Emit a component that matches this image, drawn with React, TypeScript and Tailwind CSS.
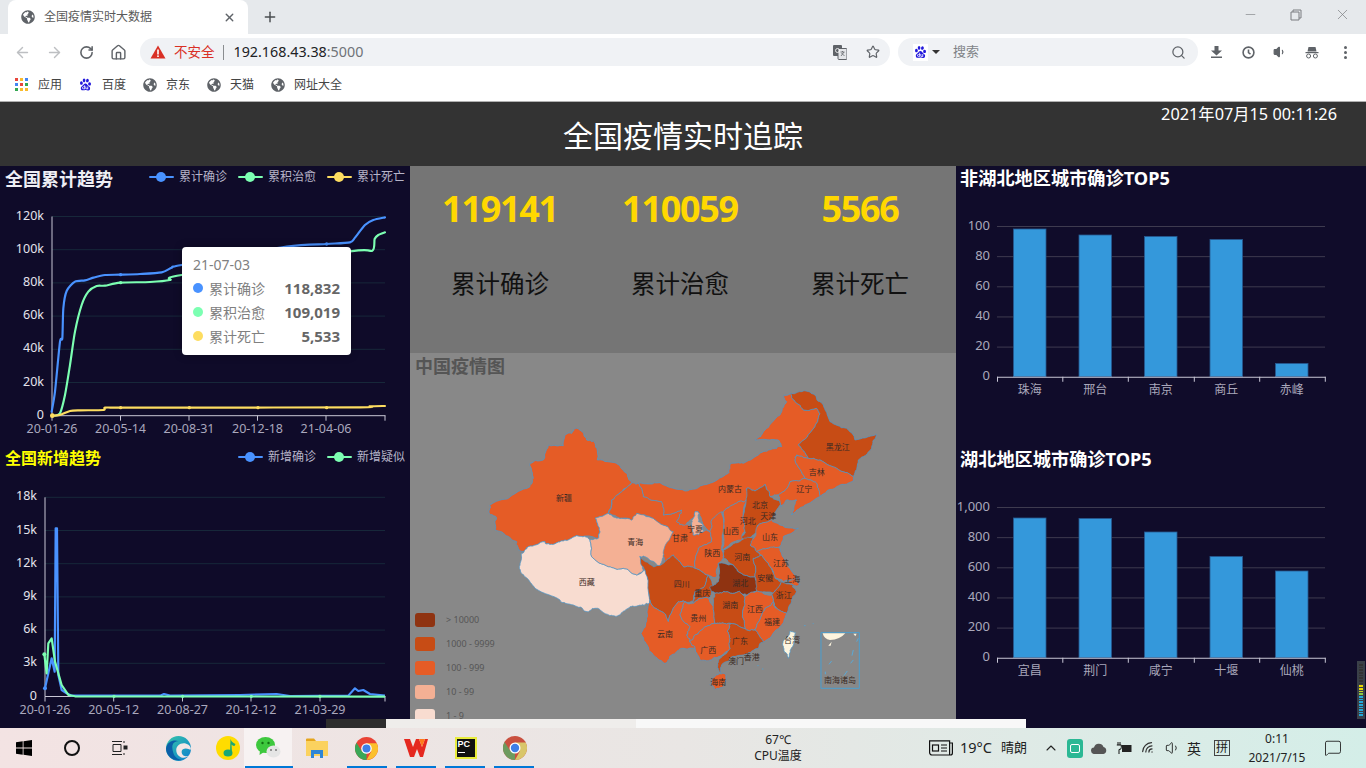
import { ArrowLeft, ArrowRight, ChevronUp, MessageSquare, Plus, RotateCw, House, Search, Star, Volume1, Wifi, X, Minus } from "lucide-react";
import { FaGlobeAmericas } from "react-icons/fa";
import { RiBaiduFill } from "react-icons/ri";

type Pt = number[];

const BLUE = "#4992ff";
const GREEN = "#7cffb2";
const YELLOW = "#fddd60";

// Catmull-Rom through the points, so the lines come out curved like the chart lib
function smooth(p: Pt[]) {
    let d = `M${p[0][0]} ${p[0][1]}`;
    for (let i = 0; i < p.length - 1; i++) {
        const a = p[i - 1] || p[i];
        const b = p[i];
        const c = p[i + 1];
        const e = p[i + 2] || c;
        d += ` C${b[0] + (c[0] - a[0]) / 8} ${b[1] + (c[1] - a[1]) / 8} ${c[0] - (e[0] - b[0]) / 8} ${c[1] - (e[1] - b[1]) / 8} ${c[0]} ${c[1]}`;
    }
    return d;
}

const poly = (p: Pt[]) => p.map((q) => q.join(",")).join(" ");

// borders are wiggly on the real map. The jitter only depends on the edge midpoint
// so two provinces sharing an edge still line up.
function wiggle(p: Pt[], offsetX: number) {
    const noise = (x: number, y: number) => {
        const s = Math.sin((x + offsetX) * 12.9898 + y * 78.233) * 43758.5453;
        return s - Math.floor(s) - 0.5;
    };
    let pts = p;
    [9, 5, 3].forEach((amp) => {
        const next: Pt[] = [];
        pts.forEach((a, i) => {
            const b = pts[(i + 1) % pts.length];
            const mx = (a[0] + b[0]) / 2;
            const my = (a[1] + b[1]) / 2;
            next.push(a, [mx + noise(mx, my) * amp, my + noise(my, mx) * amp]);
        });
        pts = next;
    });
    return pts.map((q) => `${q[0].toFixed(1)},${q[1].toFixed(1)}`).join(" ");
}

function Legend({ items }: { items: { color: string; label: string }[] }) {
    return (
        <div className="flex gap-[11px] pr-[5px] pt-[3px]">
            {items.map((it) => (
                <div key={it.label} className="flex items-center gap-[5px] text-[12px] leading-[16px] text-[#b6b4c8]">
                    <span className="relative block h-[2px] w-[25px] rounded" style={{ backgroundColor: it.color }}>
                        <span className="absolute left-[7px] top-[-4px] h-[10px] w-[10px] rounded-full" style={{ backgroundColor: it.color }} />
                    </span>
                    <span>{it.label}</span>
                </div>
            ))}
        </div>
    );
}

function LineAxes({ x0, top, step, labels, yLabels, ticks }: { x0: number; top: number; step: number; labels: string[]; yLabels: string[]; ticks: number[] }) {
    const bottom = top + step * (yLabels.length - 1);
    return (
        <g fontSize="12.5">
            {yLabels.map((l, i) => (
                <g key={l}>
                    {i < yLabels.length - 1 && <line x1={x0} x2="385" y1={top + step * i} y2={top + step * i} stroke="#17283a" />}
                    <text x={x0 - 8} y={top + step * i + 3} textAnchor="end" fill="#e4e3ec">
                        {l}
                    </text>
                </g>
            ))}
            <line x1={x0} x2={x0} y1={top} y2={bottom} stroke="#c9c7d6" />
            <line x1={x0} x2="385.5" y1={bottom} y2={bottom} stroke="#c9c7d6" />
            {ticks.map((t, i) => (
                <g key={t}>
                    <line x1={t} x2={t} y1={bottom} y2={bottom + 5} stroke="#c9c7d6" />
                    {labels[i] && (
                        <text x={t} y={bottom + 17.5} textAnchor="middle" fill="#aaa8bd">
                            {labels[i]}
                        </text>
                    )}
                </g>
            ))}
        </g>
    );
}

const totalBlue: Pt[] = [[155, 740], [165, 680], [180, 530], [187, 520], [190, 430], [200, 378], [225, 350], [255, 346], [280, 338], [315, 330], [360, 329], [420, 327], [485, 322], [515, 308], [545, 300], [860, 245], [980, 237], [1050, 232], [1065, 218], [1095, 180], [1120, 165], [1155, 157]];
const totalGreen: Pt[] = [[165, 752], [180, 745], [195, 690], [210, 600], [225, 500], [245, 420], [265, 380], [290, 363], [315, 362], [360, 353], [450, 351], [510, 345], [545, 330], [1050, 259], [1117, 257], [1124, 222], [1135, 210], [1155, 202]];
const totalYellow: Pt[] = [[155, 752], [180, 750], [210, 738], [240, 736], [310, 735], [315, 728], [360, 728], [570, 728], [1080, 727], [1110, 724], [1155, 723]];

const newBlue: Pt[] = [[135, 730], [155, 640], [164, 680], [167, 250], [171, 250], [175, 690], [185, 735], [200, 745], [215, 752], [480, 752], [492, 747], [510, 752], [720, 750], [830, 747], [870, 753], [1045, 752], [1065, 730], [1075, 738], [1090, 735], [1110, 747], [1155, 752]];
const newGreen: Pt[] = [[133, 628], [140, 685], [145, 595], [155, 580], [165, 650], [185, 720], [205, 750], [225, 754], [1155, 755]];

function TotalChart() {
    return (
        <svg width="410" height="252" viewBox="0 194 410 252" className="block" fontFamily="'Noto Sans', sans-serif">
            <LineAxes x0={52} top={216.5} step={33.2} yLabels={["120k", "100k", "80k", "60k", "40k", "20k", "0"]} labels={["20-01-26", "20-05-14", "20-08-31", "20-12-18", "21-04-06"]} ticks={[52, 120.5, 189, 257.5, 326, 385]} />
            <g transform="translate(0 165) scale(0.3333)" fill="none" strokeWidth="6.5" strokeLinecap="round">
                <path d={smooth(totalBlue)} stroke={BLUE} />
                <path d={smooth(totalGreen)} stroke={GREEN} />
                <path d={smooth(totalYellow)} stroke={YELLOW} />
                <circle cx="362" cy="329" r="5" fill={BLUE} />
                <circle cx="980" cy="237" r="5" fill={BLUE} />
                <circle cx="362" cy="353" r="5" fill={GREEN} />
                <circle cx="157" cy="752" r="7" fill={YELLOW} />
                <circle cx="362" cy="728" r="5" fill={YELLOW} />
                <circle cx="568" cy="728" r="5" fill={YELLOW} />
                <circle cx="774" cy="728" r="5" fill={YELLOW} />
                <circle cx="980" cy="728" r="5" fill={YELLOW} />
            </g>
        </svg>
    );
}

function NewChart() {
    return (
        <svg width="410" height="254" viewBox="0 474 410 254" className="block" fontFamily="'Noto Sans', sans-serif">
            <LineAxes x0={45} top={497.3} step={33.2} yLabels={["18k", "15k", "12k", "9k", "6k", "3k", "0"]} labels={["20-01-26", "20-05-12", "20-08-27", "20-12-12", "21-03-29"]} ticks={[45, 113.7, 182.5, 251, 320, 385]} />
            <g transform="translate(0 445) scale(0.3333)" fill="none" strokeWidth="6.5" strokeLinejoin="round">
                <polyline points={poly(newBlue)} stroke={BLUE} />
                <polyline points={poly(newGreen)} stroke={GREEN} />
                <circle cx="135" cy="730" r="6" fill={BLUE} />
                <circle cx="133" cy="628" r="6" fill={GREEN} />
                <circle cx="342" cy="754" r="5" fill={GREEN} />
                <circle cx="548" cy="754" r="5" fill={GREEN} />
                <circle cx="754" cy="754" r="5" fill={GREEN} />
                <circle cx="960" cy="754" r="5" fill={GREEN} />
            </g>
        </svg>
    );
}

const barXs = [1013.5, 1079, 1144.5, 1210, 1275.5];
const tickXs = [997.5, 1062.8, 1128.3, 1194.3, 1259.7, 1325.3];

function BarChart({ top, yLabels, tops, labels, y0 }: { top: number; yLabels: string[]; tops: number[]; labels: string[]; y0: number }) {
    const step = 30.15;
    const base = top + step * 5;
    return (
        <svg width="410" height="238" viewBox={`956 ${y0} 410 238`} className="block" fontFamily="'Noto Sans', sans-serif">
            {yLabels.map((l, i) => (
                <g key={l}>
                    {i < 5 && <line x1="997" x2="1325" y1={top + step * i + 0.5} y2={top + step * i + 0.5} stroke="#3e3b4f" />}
                    <text x="990" y={top + step * i + 3.5} textAnchor="end" fontSize="13" fill="#aaa8bb">
                        {l}
                    </text>
                </g>
            ))}
            {barXs.map((x, i) => (
                <rect key={x} x={x} y={tops[i]} width="32.5" height={base - tops[i]} fill="#3498db" stroke="#27598f" strokeWidth="0.8" />
            ))}
            <line x1="997" x2="1325.5" y1={base + 0.5} y2={base + 0.5} stroke="#c9c7d6" />
            {tickXs.map((t) => (
                <line key={t} x1={t} x2={t} y1={base} y2={base + 5} stroke="#c9c7d6" />
            ))}
            {labels.map((l, i) => (
                <text key={l} x={barXs[i] + 16.2} y={base + 17} textAnchor="middle" fontSize="12" fontFamily="'Noto Sans CJK SC', sans-serif" fill="#aaa8bb">
                    {l}
                </text>
            ))}
        </svg>
    );
}

const C1 = "#8f3311";
const C2 = "#c74c15";
const C3 = "#e55c26";
const C4 = "#f4b094";
const C5 = "#f8dcd0";

// first batch in coordinates of the west crop, the rest of the east crop (3x page px)
const west: [string, Pt[]][] = [
    [C3, [[285, 130], [300, 135], [320, 165], [345, 175], [352, 225], [410, 235], [440, 265], [455, 293], [425, 320], [395, 345], [385, 385], [345, 400], [360, 440], [355, 460], [290, 452], [255, 465], [215, 478], [195, 470], [145, 485], [130, 500], [115, 495], [110, 470], [75, 450], [45, 435], [50, 400], [28, 385], [30, 360], [85, 340], [150, 305], [160, 280], [150, 235], [190, 225], [205, 180], [250, 182], [255, 150], [275, 145]]],
    [C5, [[125, 505], [145, 485], [195, 470], [215, 478], [255, 465], [290, 452], [330, 465], [335, 515], [385, 545], [430, 550], [470, 570], [495, 555], [505, 600], [510, 655], [495, 660], [480, 660], [450, 665], [420, 690], [390, 692], [345, 670], [321, 680], [280, 660], [240, 645], [165, 610], [135, 575], [118, 550]]],
    [C4, [[385, 385], [345, 400], [360, 440], [355, 460], [330, 465], [335, 515], [385, 545], [430, 550], [470, 570], [490, 555], [480, 515], [495, 515], [540, 550], [550, 510], [570, 505], [580, 440], [550, 420], [520, 400], [470, 385], [455, 405], [420, 400]]],
];

const east: [string, Pt[]][] = [
    [C3, [[-25, 293], [-5, 295], [10, 335], [65, 350], [70, 390], [125, 375], [110, 410], [130, 420], [155, 425], [160, 450], [190, 440], [210, 440], [215, 470], [175, 490], [165, 550], [130, 545], [100, 510], [75, 535], [70, 500], [100, 440], [70, 420], [40, 400], [-10, 385], [-25, 405], [-60, 400], [-95, 385], [-85, 345], [-55, 320]]],
    [C3, [[-5, 295], [60, 293], [135, 318], [190, 300], [265, 265], [270, 238], [310, 235], [370, 200], [410, 190], [425, 185], [415, 165], [345, 165], [375, 135], [420, 90], [440, 50], [432, 30], [450, 25], [470, 55], [490, 75], [530, 70], [540, 85], [525, 125], [475, 180], [505, 220], [470, 210], [465, 225], [495, 280], [450, 290], [415, 330], [390, 335], [375, 298], [345, 318], [320, 310], [320, 345], [295, 350], [250, 380], [215, 405], [210, 440], [190, 420], [178, 385], [165, 380], [160, 400], [130, 420], [110, 410], [125, 375], [70, 390], [65, 350], [10, 335]]],
    [C2, [[450, 25], [490, 18], [525, 30], [550, 60], [570, 110], [620, 130], [645, 165], [710, 148], [695, 190], [655, 225], [640, 275], [590, 250], [540, 225], [505, 220], [475, 180], [525, 125], [540, 85], [530, 70], [490, 75], [470, 55]]],
    [C3, [[465, 225], [470, 210], [505, 220], [540, 225], [590, 250], [640, 275], [635, 290], [590, 305], [540, 335], [530, 295], [495, 280]]],
    [C3, [[450, 290], [495, 280], [530, 295], [540, 335], [490, 365], [455, 390], [470, 345], [440, 345], [420, 365], [420, 350], [415, 330]]],
    [C2, [[0, 515], [40, 545], [70, 535], [100, 510], [130, 545], [165, 550], [205, 570], [185, 610], [165, 620], [160, 650], [135, 650], [115, 650], [85, 710], [65, 680], [30, 650], [28, 640], [15, 555]]],
    [C3, [[30, 650], [65, 680], [85, 710], [115, 650], [135, 650], [120, 690], [150, 725], [140, 750], [150, 770], [165, 790], [125, 790], [95, 810], [75, 835], [45, 815], [15, 770], [3, 745], [20, 700]]],
    [C3, [[120, 690], [135, 650], [160, 655], [185, 640], [205, 640], [220, 665], [225, 715], [190, 730], [165, 750], [150, 770], [140, 750], [150, 725]]],
    [C2, [[160, 655], [165, 620], [185, 610], [205, 570], [225, 610], [205, 640], [185, 640]]],
    [C3, [[245, 380], [250, 440], [245, 490], [250, 520], [235, 535], [230, 575], [205, 570], [165, 550], [175, 490], [215, 470], [210, 440], [215, 405]]],
    [C4, [[165, 380], [178, 385], [175, 410], [190, 420], [190, 440], [160, 450], [155, 425], [160, 400]]],
    [C3, [[250, 380], [295, 350], [320, 345], [310, 390], [315, 440], [305, 465], [245, 495], [250, 440]]],
    [C2, [[320, 310], [345, 318], [375, 298], [390, 335], [420, 350], [410, 375], [395, 405], [355, 420], [340, 450], [310, 465], [305, 455], [315, 440], [310, 390]]],
    [C3, [[355, 420], [395, 405], [420, 420], [475, 430], [430, 455], [420, 485], [385, 490], [350, 500], [330, 480], [345, 455]]],
    [C2, [[250, 495], [305, 465], [340, 455], [330, 480], [350, 500], [365, 510], [340, 520], [345, 575], [310, 570], [280, 540], [250, 520]]],
    [C1, [[235, 535], [280, 540], [310, 570], [345, 575], [352, 618], [320, 630], [295, 620], [250, 620], [225, 625], [210, 605], [235, 590]]],
    [C2, [[365, 510], [390, 545], [405, 580], [425, 590], [400, 625], [350, 620], [345, 575], [340, 520]]],
    [C3, [[350, 500], [385, 490], [420, 490], [440, 540], [470, 580], [430, 590], [405, 575], [390, 545], [365, 510]]],
    [C3, [[470, 580], [480, 600], [460, 600], [445, 590]]],
    [C2, [[425, 590], [460, 600], [470, 620], [455, 650], [440, 685], [410, 670], [395, 630]]],
    [C3, [[315, 635], [352, 618], [395, 630], [400, 650], [375, 670], [350, 720], [345, 735], [315, 731], [310, 670]]],
    [C2, [[225, 625], [250, 620], [295, 620], [315, 635], [310, 670], [315, 731], [270, 715], [240, 715], [225, 715], [220, 665]]],
    [C3, [[375, 670], [400, 650], [410, 670], [440, 685], [425, 720], [390, 760], [370, 770], [345, 735], [350, 720]]],
    [C2, [[262, 738], [270, 715], [315, 731], [345, 735], [370, 770], [355, 790], [310, 810], [270, 820], [245, 840], [243, 862], [233, 850], [235, 825], [270, 790], [270, 760]]],
    [C3, [[150, 770], [165, 750], [190, 730], [225, 715], [240, 715], [270, 715], [262, 738], [270, 760], [270, 790], [235, 815], [215, 825], [180, 825], [165, 790]]],
    [C3, [[215, 880], [240, 866], [258, 872], [250, 905], [225, 914], [210, 900]]],
    ["#fdf5df", [[450, 738], [466, 742], [458, 785], [445, 820], [432, 795], [432, 765]]],
];

const westLabels: [string, number, number][] = [["新疆", 252, 340], ["青海", 466, 472], ["西藏", 320, 592]];
const eastLabels: [string, number, number][] = [["四川", 125, 598], ["甘肃", 120, 460], ["宁夏", 165, 432], ["内蒙古", 270, 313], ["黑龙江", 593, 187], ["吉林", 530, 262], ["辽宁", 493, 313], ["北京", 360, 360], ["天津", 385, 392], ["河北", 323, 408], ["山西", 273, 438], ["山东", 390, 455], ["陕西", 217, 505], ["河南", 307, 517], ["江苏", 423, 535], ["上海", 457, 582], ["安徽", 376, 580], ["湖北", 301, 594], ["重庆", 187, 625], ["浙江", 431, 631], ["湖南", 271, 660], ["江西", 345, 673], ["贵州", 175, 700], ["福建", 396, 711], ["云南", 75, 747], ["广东", 300, 768], ["广西", 205, 796], ["台湾", 456, 766], ["香港", 335, 817], ["澳门", 288, 828], ["海南", 235, 891], ["南海诸岛", 600, 886]];

const mapLegend: [string, string][] = [[C1, "> 10000"], [C2, "1000 - 9999"], [C3, "100 - 999"], [C4, "10 - 99"], [C5, "1 - 9"]];

function ChinaMap() {
    return (
        <svg width="546" height="375" viewBox="410 353 546 375" className="absolute left-0 top-0" fontFamily="'Noto Sans CJK SC', sans-serif">
            <g transform="translate(480 385) scale(0.3333)" stroke="#4f97c8" strokeWidth="2.2" strokeLinejoin="round">
                {west.map(([c, p], i) => (
                    <polygon key={i} points={wiggle(p, 0)} fill={c} />
                ))}
            </g>
            <g transform="translate(640 385) scale(0.3333)" stroke="#4f97c8" strokeWidth="2.2" strokeLinejoin="round">
                {east.map(([c, p], i) => (
                    <polygon key={i} points={wiggle(p, 480)} fill={c} />
                ))}
                <rect x="543" y="743" width="115" height="167" fill="none" stroke="#4a9fd0" strokeWidth="3" />
                <path d="M548 745 H616 Q600 764 570 765 Q552 762 548 745Z" fill="#fdf5df" stroke="none" />
                <path d="M640 746 L650 746 L646 754Z M575 770 L565 782 L572 782Z" fill="#fdf5df" stroke="none" />
                <path d="M655 760 L650 770 M640 795 L636 812 M640 825 L632 835 M575 828 L567 838 M622 858 L612 872 M556 860 L556 868" fill="none" stroke="#5aa8d4" strokeWidth="3" />
                <path d="M492 722 h5 M518 716 h3 M352 842 h4 M366 852 h4" fill="none" stroke="#5a9cc4" strokeWidth="3" />
            </g>
            <g transform="translate(480 385) scale(0.3333)" fontSize="24" fill="#3a2a24" textAnchor="middle">
                {westLabels.map(([t, x, y]) => (
                    <text key={t} x={x} y={y + 9}>
                        {t}
                    </text>
                ))}
            </g>
            <g transform="translate(640 385) scale(0.3333)" fontSize="24" fill="#3a2a24" textAnchor="middle">
                {eastLabels.map(([t, x, y]) => (
                    <text key={t} x={x} y={y + 9}>
                        {t}
                    </text>
                ))}
            </g>
            {mapLegend.map(([c, t], i) => (
                <g key={t}>
                    <rect x="415" y={613 + i * 24} width="20" height="14" rx="3" fill={c} />
                    <text x="446" y={623 + i * 24} fontSize="9" fontFamily="'Noto Sans', sans-serif" fill="#565656">
                        {t}
                    </text>
                </g>
            ))}
        </svg>
    );
}

function Globe() {
    return <FaGlobeAmericas className="text-[#5f6368]" size={14} />;
}

function Bookmark({ icon, label }: { icon: React.ReactNode; label: string }) {
    return (
        <div className="flex items-center gap-[9px] text-[12px] text-[#444]">
            <span className="flex w-[15px] justify-center">{icon}</span>
            <span>{label}</span>
        </div>
    );
}

function AppsIcon() {
    const colors = ["#e8453c", "#f9bb2d", "#4285f4", "#4285f4", "#e8453c", "#34a853", "#34a853", "#f9bb2d", "#f9bb2d"];
    return (
        <div className="grid h-[13px] w-[13px] grid-cols-3 gap-[2px]">
            {colors.map((c, i) => (
                <span key={i} className="block" style={{ backgroundColor: c }} />
            ))}
        </div>
    );
}

function BrowserChrome() {
    return (
        <div className="h-[102px] shrink-0 border-b border-[#b0b0b0] bg-white">
            <div className="flex h-[34px] items-end bg-[#e6e9ec] pl-[8px]">
                <div className="flex h-[34px] w-[240px] items-center rounded-t-[8px] bg-white pl-[13px] pr-[12px]">
                    <Globe />
                    <span className="ml-[9px] flex-1 text-[12px] text-[#5a5a5a]">全国疫情实时大数据</span>
                    <X size={13} strokeWidth={2.5} className="text-[#5f6368]" />
                </div>
                <Plus size={16} strokeWidth={2.2} className="mb-[9px] ml-[14px] text-[#4a4d50]" />
                <div className="flex-1" />
                <div className="mb-[11px] flex items-center gap-[32px] pr-[15px] text-[#7a7d80]">
                    <Minus size={15} strokeWidth={1} />
                    <svg width="12" height="12" viewBox="0 0 12 12" fill="none" stroke="currentColor">
                        <path d="M3 3V1h8v8H9M1 3h8v8H1z" />
                    </svg>
                    <X size={17} strokeWidth={1} />
                </div>
            </div>
            <div className="flex h-[34px] items-center pt-[2px]">
                <ArrowLeft size={17} className="ml-[14px] text-[#bdbfc2]" />
                <ArrowRight size={17} className="ml-[15px] text-[#bdbfc2]" />
                <RotateCw size={15} strokeWidth={2.5} className="ml-[16px] text-[#5f6368]" />
                <House size={17} strokeWidth={2} className="ml-[16px] text-[#5f6368]" />
                <div className="ml-[13px] flex h-[28px] w-[750px] items-center rounded-full bg-[#f0f2f5] pl-[10px] pr-[10px]">
                    <svg width="16" height="14" viewBox="0 0 16 14">
                        <path d="M8 0.5 L15.5 13.5 H0.5Z" fill="#d93025" />
                        <rect x="7.2" y="4.5" width="1.6" height="5" fill="#fff" />
                        <rect x="7.2" y="10.4" width="1.6" height="1.6" fill="#fff" />
                    </svg>
                    <span className="ml-[8px] text-[13.5px] text-[#d93025]">不安全</span>
                    <span className="ml-[8px] mr-[10px] h-[15px] w-px bg-[#8a8d90]" />
                    <span className="text-[14.3px] text-[#202124]">192.168.43.38</span>
                    <span className="text-[14.3px] text-[#6f7378]">:5000</span>
                    <div className="flex-1" />
                    <svg width="14" height="15" viewBox="0 0 14 15" className="mr-[19px]">
                        <rect x="0" y="0" width="9" height="11" rx="1" fill="#5f6368" />
                        <rect x="5" y="3.5" width="9" height="11" rx="1" fill="#e4e6e9" stroke="#5f6368" />
                        <path d="M7.5 7h4M9.5 6v1M8 11l3-4M8.5 8l3 3" stroke="#5f6368" strokeWidth="0.8" fill="none" />
                        <circle cx="4.5" cy="5.5" r="2" fill="none" stroke="#fff" strokeWidth="0.8" />
                    </svg>
                    <Star size={14} strokeWidth={2} className="text-[#5f6368]" />
                </div>
                <div className="ml-[8px] flex h-[28px] w-[300px] items-center rounded-full bg-[#f0f2f5] pl-[15px] pr-[12px]">
                    <span className="flex h-[17px] w-[15px] items-center justify-center bg-white">
                        <RiBaiduFill size={16} className="text-[#2319dc]" />
                    </span>
                    <span className="ml-[4px] h-0 w-0 border-x-[4px] border-t-[4px] border-x-transparent border-t-[#333]" />
                    <span className="ml-[13px] flex-1 text-[13px] text-[#7f8387]">搜索</span>
                    <Search size={15} strokeWidth={2} className="text-[#5f6368]" />
                </div>
                <div className="ml-[2px] flex items-center">
                    <span className="flex w-[32px] justify-center">
                        <svg width="11" height="12" viewBox="0 0 11 12" fill="#5f6368">
                            <path d="M3.5 0h4v4.5H11L5.5 9.5 0 4.5h3.5z" />
                            <rect x="0" y="10.5" width="11" height="1.5" />
                        </svg>
                    </span>
                    <span className="flex w-[32px] justify-center">
                        <svg width="13" height="13" viewBox="0 0 13 13" fill="none" stroke="#5f6368" strokeWidth="1.6">
                            <circle cx="6.5" cy="6.5" r="5.4" />
                            <path d="M6.5 3.5v3.2l2 1.4" />
                        </svg>
                    </span>
                    <span className="flex w-[32px] justify-center"><Volume1 size={14} fill="#5f6368" className="text-[#5f6368]" /></span>
                    <span className="flex w-[32px] justify-center">
                        <svg width="14" height="13" viewBox="0 0 14 13" fill="#5f6368">
                            <path d="M3.5 1h7l1 4.5h-9z" />
                            <rect x="0.5" y="6" width="13" height="1.2" />
                            <circle cx="3.6" cy="10" r="2" fill="none" stroke="#5f6368" />
                            <circle cx="10.4" cy="10" r="2" fill="none" stroke="#5f6368" />
                        </svg>
                    </span>
                    <span className="flex w-[34px] flex-col items-center gap-[2px]">
                        <span className="block h-[3px] w-[3px] rounded-full bg-[#5f6368]" />
                        <span className="block h-[3px] w-[3px] rounded-full bg-[#5f6368]" />
                        <span className="block h-[3px] w-[3px] rounded-full bg-[#5f6368]" />
                    </span>
                </div>
            </div>
            <div className="flex h-[33px] items-center gap-[16px] pl-[14px]">
                <Bookmark icon={<AppsIcon />} label="应用" />
                <Bookmark icon={<RiBaiduFill size={15} className="text-[#2319dc]" />} label="百度" />
                <Bookmark icon={<Globe />} label="京东" />
                <Bookmark icon={<Globe />} label="天猫" />
                <Bookmark icon={<Globe />} label="网址大全" />
            </div>
        </div>
    );
}

function Tooltip() {
    const rows = [
        { c: BLUE, t: "累计确诊", v: "118,832" },
        { c: GREEN, t: "累积治愈", v: "109,019" },
        { c: YELLOW, t: "累计死亡", v: "5,533" },
    ];
    return (
        <div className="absolute left-[182px] top-[81px] h-[108px] w-[169px] rounded-[4px] bg-white px-[11px] pt-[9px] text-[#666] shadow-[0_0_8px_rgba(0,0,0,0.3)]">
            <div className="text-[14px] leading-[18px] text-[#808080]">21-07-03</div>
            <div className="mt-[2px] flex flex-col">
                {rows.map((r) => (
                    <div key={r.t} className="flex h-[24px] items-center">
                        <span className="h-[10px] w-[10px] rounded-full" style={{ backgroundColor: r.c }} />
                        <span className="ml-[6px] flex-1 text-[14px] text-[#808080]">{r.t}</span>
                        <span className="text-[15px] font-bold text-[#666]">{r.v}</span>
                    </div>
                ))}
            </div>
        </div>
    );
}

function Stat({ value, label }: { value: string; label: string }) {
    return (
        <div className="flex flex-col items-center">
            <div className="mt-[16px] text-[36px] font-bold leading-[54px] tracking-[-1.3px] text-[#ffd800]">{value}</div>
            <div className="mt-[30px] text-[24.5px] leading-[36px] text-[#111]">{label}</div>
        </div>
    );
}

function WinIcon() {
    return (
        <svg width="16" height="16" viewBox="0 0 16 16" fill="#000">
            <path d="M0 2.3 6.7 1.3V7.5H0ZM7.5 1.2 16 0V7.5H7.5ZM0 8.4H6.7V14.7L0 13.7ZM7.5 8.4H16V16L7.5 14.8Z" />
        </svg>
    );
}

function ChromeLogo({ size, a, b, c }: { size: number; a: string; b: string; c: string }) {
    return (
        <svg width={size} height={size} viewBox="0 0 24 24">
            <circle cx="12" cy="12" r="12" fill={a} />
            <path d="M12 6.5h10.7A12 12 0 0 1 12 24l5-9z" fill={b} />
            <path d="M12 24A12 12 0 0 1 1.6 6l5.7 9 4.7 1z" fill={c} />
            <circle cx="12" cy="12" r="5.5" fill="#fff" />
            <circle cx="12" cy="12" r="4.2" fill="#3f7fe6" />
        </svg>
    );
}

function TaskIcons() {
    return (
        <div className="flex h-full items-center">
            <div className="flex w-[48px] justify-center"><WinIcon /></div>
            <div className="flex w-[48px] justify-center">
                <span className="block h-[16px] w-[16px] rounded-full border-[2.5px] border-[#111]" />
            </div>
            <div className="flex w-[48px] justify-center">
                <svg width="16" height="16" viewBox="0 0 16 16" fill="none" stroke="#222" strokeWidth="1">
                    <path d="M0 1.5h10M0 14.5h10M1 4.5h8v7H1zM12 1v2M12 13v2" />
                    <rect x="12" y="6" width="3" height="3" fill="#222" />
                </svg>
            </div>
            {/* edge */}
            <div className="ml-[10px] flex h-full w-[48px] items-center justify-center">
                <svg width="25" height="25" viewBox="0 0 24 24">
                    <defs>
                        <linearGradient id="edgeA" x1="0" y1="0" x2="1" y2="1">
                            <stop offset="0" stopColor="#36c5a8" />
                            <stop offset="1" stopColor="#0c7fd0" />
                        </linearGradient>
                    </defs>
                    <circle cx="12" cy="12" r="12" fill="url(#edgeA)" />
                    <path d="M24 13c0-4-4-6-7-6-4 0-8 3-7 8 1 5 7 8 12 4-3 1-7 0-7-4 0-2 2-3 4-3 2 0 3 1 5 1z" fill="#f3e6e6" />
                    <path d="M0 12C1 5 8 3 12 5 6 5 5 10 7 16c1 4 4 6 8 7C7 25 0 19 0 12Z" fill="#0b5fa8" />
                </svg>
            </div>
            {/* qq music */}
            <div className="ml-[2px] flex h-full w-[48px] items-center justify-center">
                <svg width="24" height="24" viewBox="0 0 24 24">
                    <circle cx="12" cy="12" r="12" fill="#ffdc00" />
                    <ellipse cx="12" cy="17" rx="4.5" ry="3.5" fill="#1aa874" />
                    <path d="M14 17 14.5 3c1 3 3 4 5 5l-1 2c-1 0-2-.5-3-1.5L16 17z" fill="#1aa874" />
                </svg>
            </div>
            {/* wechat, open */}
            <div className="ml-[-8px] flex h-full w-[48px] items-center justify-center bg-[#f7f2f2]">
                <svg width="25" height="24" viewBox="0 0 25 24">
                    <ellipse cx="9.5" cy="9" rx="9.5" ry="8" fill="#3ec83e" />
                    <path d="M4 14 3.5 19 8 16z" fill="#3ec83e" />
                    <circle cx="6.5" cy="7" r="1.2" fill="#127012" />
                    <circle cx="12.5" cy="7" r="1.2" fill="#127012" />
                    <ellipse cx="17.5" cy="15.5" rx="7" ry="6" fill="#e5e5e5" />
                    <circle cx="15" cy="14" r="1" fill="#777" />
                    <circle cx="20" cy="14" r="1" fill="#777" />
                </svg>
            </div>
            {/* explorer */}
            <div className="ml-[1px] flex h-full w-[48px] items-center justify-center">
                <svg width="22" height="20" viewBox="0 0 22 20">
                    <path d="M0 3V1.5A1 1 0 0 1 1 .5h7l2 2.5z" fill="#e5a51c" />
                    <rect x="0" y="3" width="22" height="15" fill="#fbd25f" />
                    <path d="M5 20v-8h12v8h-3v-4H8v4z" fill="#2f86d6" />
                </svg>
            </div>
            {/* chrome */}
            <div className="ml-[1px] flex h-full w-[48px] items-center justify-center">
                <ChromeLogo size={23} a="#e94335" b="#fbc02d" c="#3aa757" />
            </div>
            {/* wps */}
            <div className="ml-[1px] flex h-full w-[49px] items-center justify-center">
                <svg width="24" height="18" viewBox="0 0 24 18">
                    <path d="M0 0h6l3 8 3-8h3l3 8 3-8h3l-5 18h-3l-3-8-3 8H6z" fill="#e5281f" />
                    <path d="M15 0h3l3 0-3 8z" fill="#ff7a1a" />
                </svg>
            </div>
            {/* pycharm */}
            <div className="ml-[1px] flex h-full w-[49px] items-center justify-center">
                <div className="flex h-[22px] w-[22px] flex-col bg-[#111] pl-[3px] pt-[2px] ring-2 ring-inset ring-[#e8ec3c]">
                    <span className="font-['Liberation_Sans',sans-serif] text-[9px] font-bold leading-[10px] text-white">PC</span>
                    <span className="mt-[3px] h-[1px] w-[7px] bg-white" />
                </div>
            </div>
            {/* chrome, second one */}
            <div className="ml-[1px] flex h-full w-[48px] items-center justify-center">
                <ChromeLogo size={24} a="#c9503f" b="#d9c66a" c="#6d9a5e" />
            </div>
        </div>
    );
}

function Taskbar() {
    return (
        <div className="relative flex h-[40px] shrink-0 items-center bg-gradient-to-r from-[#f3e3e3] via-[#e9e6e4] to-[#d4eee8]">
            <TaskIcons />
            <div className="absolute left-[744px] top-[4px] w-[68px] text-center text-[12px] leading-[16px] text-[#222]">
                <div>67℃</div>
                <div>CPU温度</div>
            </div>
            <div className="flex-1" />
            <div className="flex h-full items-center text-[#222]">
                <svg width="24" height="16" viewBox="0 0 24 16" fill="none" stroke="#111" strokeWidth="1.2">
                    <path d="M.6.8h20V15H3A2.4 2.4 0 0 1 .6 12.6zM20.6 3h2.8v10A2 2 0 0 1 21.4 15H20" />
                    <rect x="3.5" y="5" width="6" height="6" />
                    <path d="M12 5h6M12 8h6M12 11h6" />
                </svg>
                <span className="ml-[7px] text-[14.5px]">19°C</span>
                <span className="ml-[9px] text-[13px]">晴朗</span>
                <ChevronUp size={16} strokeWidth={1.6} className="ml-[16px]" />
                <span className="ml-[8px] flex h-[19px] w-[16px] items-center justify-center rounded-[3px] bg-[#2bb894]">
                    <span className="block h-[9px] w-[10px] rounded-[2px] border border-white" />
                </span>
                <svg width="16" height="11" viewBox="0 0 16 11" className="ml-[8px]">
                    <path d="M3.5 11A3.2 3.2 0 0 1 3 4.6 5 5 0 0 1 12.5 4 3.6 3.6 0 0 1 12.5 11z" fill="#555" />
                </svg>
                <svg width="16" height="13" viewBox="0 0 16 13" className="ml-[9px]">
                    <path d="M2 0v3M4 0v3M.8 3h4.5v2.5A2 2 0 0 1 3 7.5V12" stroke="#111" fill="none" />
                    <rect x="6" y="3" width="9.5" height="7" fill="#222" />
                </svg>
                <Wifi size={15} className="ml-[9px] -rotate-45 text-[#333]" />
                <Volume1 size={16} strokeWidth={1.4} className="ml-[9px]" />
                <span className="ml-[6px] text-[14px]">英</span>
                <span className="ml-[13px] flex h-[16px] w-[16px] items-center justify-center border border-[#444] text-[12px] leading-none">拼</span>
                <div className="ml-[16px] w-[62px] text-center text-[12px] leading-[19px]">
                    <div>0:11</div>
                    <div>2021/7/15</div>
                </div>
                <MessageSquare size={18} strokeWidth={1.2} className="ml-[16px] mr-[24px]" />
            </div>
            <div className="absolute bottom-0 left-[245px] h-[2px] w-[48px] bg-[#0078d7]" />
            <div className="absolute bottom-0 left-[347px] h-[2px] w-[40px] bg-[#0078d7]" />
            <div className="absolute bottom-0 left-[396px] h-[2px] w-[40px] bg-[#0078d7]" />
            <div className="absolute bottom-0 left-[445px] h-[2px] w-[40px] bg-[#0078d7]" />
            <div className="absolute bottom-0 left-[494px] h-[2px] w-[40px] bg-[#0078d7]" />
        </div>
    );
}

function VolumeMeter() {
    const segs = ["#333", "#333", "#333", "#333", "#333", "#333", "#333", "#333", "#e8d800", "#e8d800", "#c8d820", "#8cc840", "#22a8d8", "#22a8d8", "#22a8d8", "#22a8d8", "#22a8d8", "#22a8d8", "#22a8d8", "#22a8d8"];
    return (
        <div className="absolute right-[1px] top-[661px] flex h-[58px] w-[8px] flex-col items-center gap-[1px] bg-[#3a4048] py-[3px]">
            {segs.map((c, i) => (
                <span key={i} className="block h-[1.7px] w-[4px]" style={{ backgroundColor: c }} />
            ))}
        </div>
    );
}

export default function App() {
    return (
        <div className="relative flex h-[768px] w-[1366px] flex-col overflow-hidden bg-[#0f0b29] font-['Noto_Sans','Noto_Sans_CJK_SC',sans-serif]">
            <BrowserChrome />
            <div className="relative flex h-[64px] shrink-0 items-center justify-center bg-[#333333] text-[30px] text-white">
                <span className="mt-[2px]">全国疫情实时追踪</span>
                <span className="absolute right-[29px] top-[0px] text-[16.3px] leading-[24px] text-white">2021年07月15 00:11:26</span>
            </div>
            <div className="flex h-[562px] shrink-0">
                <div className="w-[410px] shrink-0 bg-[#0f0b29]">
                    <section className="relative h-[280px]">
                        <div className="flex h-[28px] items-start justify-between">
                            <h2 className="pl-[5px] text-[18px] font-bold leading-[26px] text-[#eeeef4]">全国累计趋势</h2>
                            <Legend items={[{ color: BLUE, label: "累计确诊" }, { color: GREEN, label: "累积治愈" }, { color: YELLOW, label: "累计死亡" }]} />
                        </div>
                        <TotalChart />
                        <Tooltip />
                    </section>
                    <section className="h-[282px]">
                        <div className="flex h-[28px] items-start justify-between">
                            <h2 className="pl-[5px] text-[16px] font-bold leading-[24px] text-[#ffff00]">全国新增趋势</h2>
                            <Legend items={[{ color: BLUE, label: "新增确诊" }, { color: GREEN, label: "新增疑似" }]} />
                        </div>
                        <NewChart />
                    </section>
                </div>
                <div className="flex w-[546px] shrink-0 flex-col">
                    <div className="grid h-[187px] shrink-0 grid-cols-3 bg-[#757575] pr-[6px]">
                        <Stat value="119141" label="累计确诊" />
                        <Stat value="110059" label="累计治愈" />
                        <Stat value="5566" label="累计死亡" />
                    </div>
                    <div className="relative flex-1 bg-[#888888]">
                        <ChinaMap />
                        <h2 className="relative pl-[5px] pt-[1px] text-[18px] font-bold leading-[24px] text-[#555]">中国疫情图</h2>
                    </div>
                </div>
                <div className="w-[410px] shrink-0 bg-[#100c2a]">
                    <h2 className="h-[28px] pl-[4px] text-[18.2px] font-bold leading-[25px] text-white">非湖北地区城市确诊TOP5</h2>
                    <BarChart y0={194} top={226} yLabels={["100", "80", "60", "40", "20", "0"]} tops={[229, 235, 236.5, 239.5, 363.5]} labels={["珠海", "邢台", "南京", "商丘", "赤峰"]} />
                    <h2 className="h-[43px] pl-[4px] pt-[14px] text-[18.2px] font-bold leading-[26px] text-white">湖北地区城市确诊TOP5</h2>
                    <BarChart y0={475} top={507} yLabels={["1,000", "800", "600", "400", "200", "0"]} tops={[518, 518.5, 532, 556.5, 571]} labels={["宜昌", "荆门", "咸宁", "十堰", "仙桃"]} />
                </div>
            </div>
            <Taskbar />
            <VolumeMeter />
            <div className="absolute left-[326px] top-[719px] flex h-[9px] w-[700px]">
                <div className="w-[60px] bg-[#2d2d2d]" />
                <div className="w-[250px] bg-[#efedeb]" />
                <div className="flex-1 bg-[#f8f8f8]" />
            </div>
        </div>
    );
}
